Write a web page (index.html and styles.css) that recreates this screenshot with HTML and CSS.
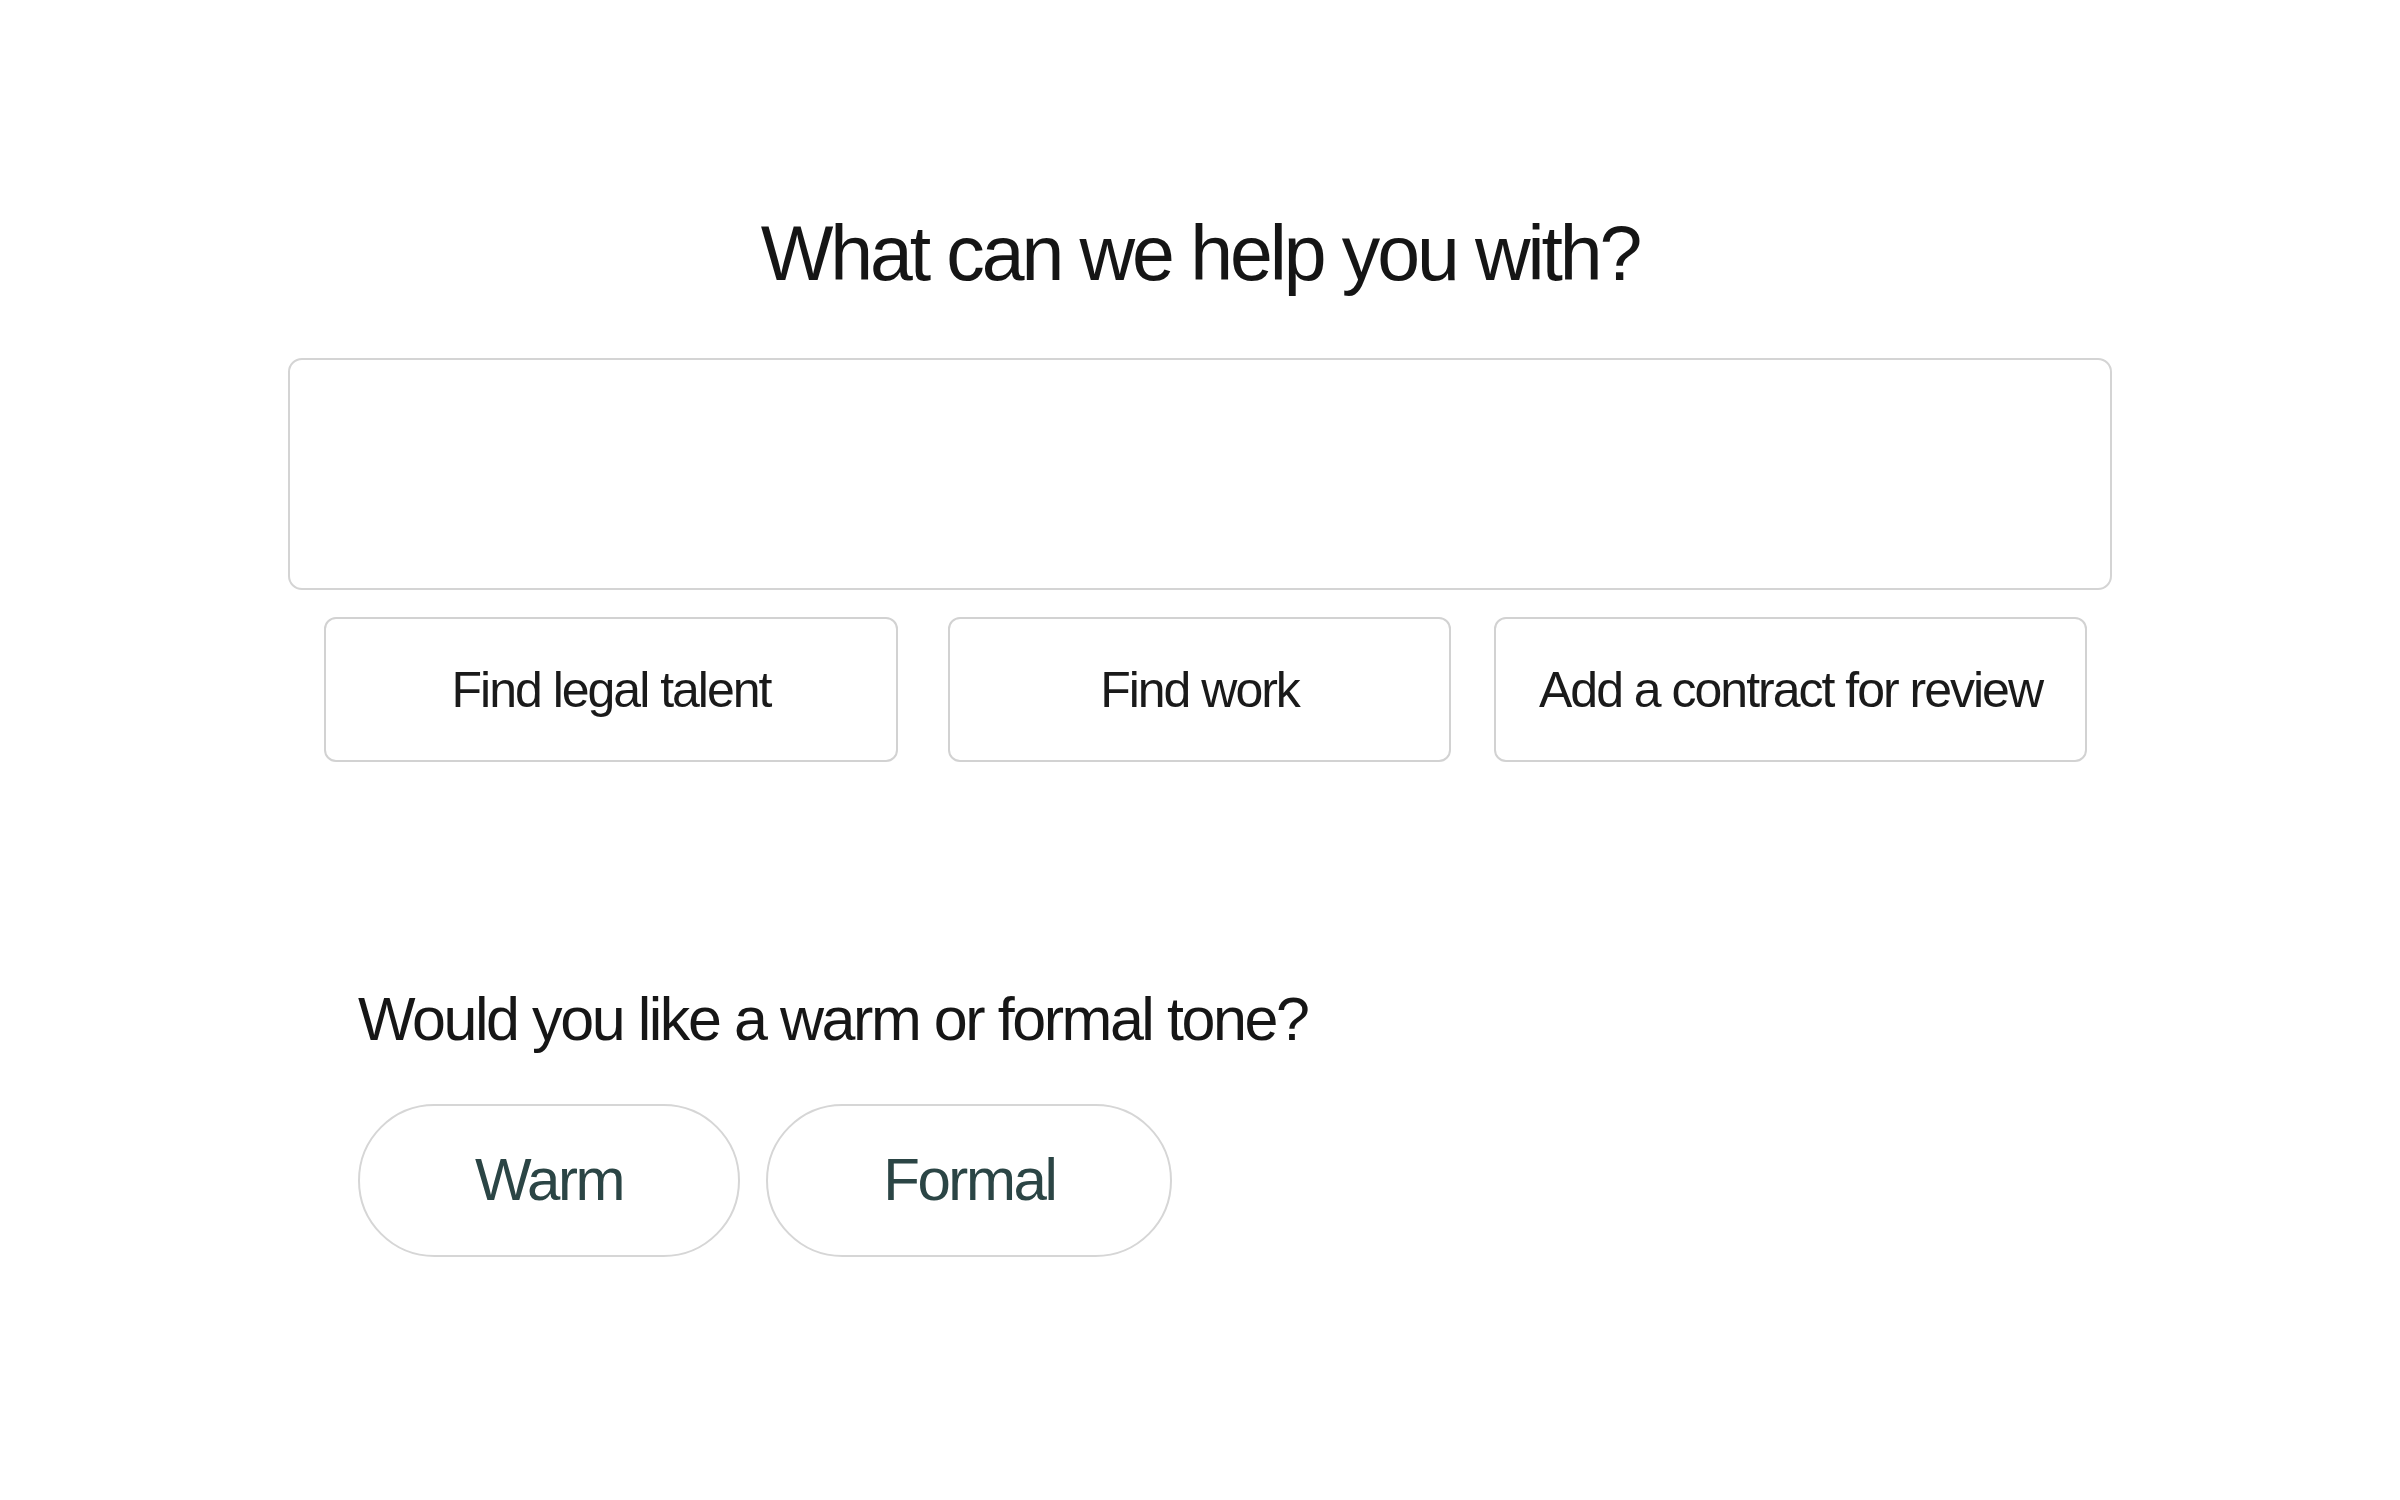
FILE: index.html
```html
<!DOCTYPE html>
<html lang="en">
<head>
<meta charset="utf-8">
<title>What can we help you with?</title>
<link rel="stylesheet" href="styles.css">
</head>
<body>
<main class="page">
  <h1 class="title">What can we help you with?</h1>
  <textarea class="prompt" aria-label="What can we help you with?"></textarea>
  <div class="actions">
    <button class="action action-talent">Find legal talent</button>
    <button class="action action-work">Find work</button>
    <button class="action action-contract">Add a contract for review</button>
  </div>
  <section class="tone">
    <h2 class="tone-question">Would you like a warm or formal tone?</h2>
    <div class="tone-options">
      <button class="pill">Warm</button>
      <button class="pill">Formal</button>
    </div>
  </section>
</main>
</body>
</html>
```
FILE: styles.css
```css
html, body {
  margin: 0;
  padding: 0;
  background: #ffffff;
}

body {
  font-family: "Liberation Sans", Arial, sans-serif;
  color: #161616;
}

.page {
  width: 1824px;
  margin: 0 auto;
  padding-top: 207px;
  display: flex;
  flex-direction: column;
}

.title {
  margin: 0;
  font-size: 77px;
  font-weight: 400;
  line-height: 1.2;
  letter-spacing: -0.04em;
  text-align: center;
  color: #151515;
}

.prompt {
  display: block;
  box-sizing: border-box;
  margin: 59px 0 0 0;
  width: 1824px;
  height: 232px;
  border: 2px solid #d4d4d4;
  border-radius: 14px;
  background: #fff;
  resize: none;
  outline: none;
  font-family: inherit;
  font-size: 40px;
  padding: 24px;
}

.actions {
  margin: 27px 0 0 36px;
  width: 1763px;
  display: flex;
  justify-content: flex-start;
}

.action {
  box-sizing: border-box;
  height: 145px;
  border: 2px solid #d2d2d2;
  border-radius: 12px;
  background: #fff;
  font-family: "Liberation Sans", Arial, sans-serif;
  font-size: 50px;
  line-height: 1.2;
  letter-spacing: -0.04em;
  color: #1a1a1a;
  padding: 0;
  display: flex;
  align-items: center;
  justify-content: center;
}

.action-talent { width: 574px; }
.action-work { width: 503px; margin-left: 50px; }
.action-contract { width: 593px; margin-left: 43px; }

.tone {
  margin: 221px 0 0 70px;
  display: flex;
  flex-direction: column;
}

.tone-question {
  margin: 0;
  font-size: 61px;
  font-weight: 400;
  line-height: 1.2;
  letter-spacing: -0.04em;
  color: #161616;
}

.tone-options {
  margin-top: 47px;
  display: flex;
  gap: 26px;
}

.pill {
  box-sizing: border-box;
  height: 153px;
  padding: 0 115px;
  border: 2px solid #d6d6d6;
  border-radius: 999px;
  background: #fff;
  font-family: "Liberation Sans", Arial, sans-serif;
  font-size: 60px;
  line-height: 1.2;
  letter-spacing: -0.04em;
  color: #2b4545;
}
```
